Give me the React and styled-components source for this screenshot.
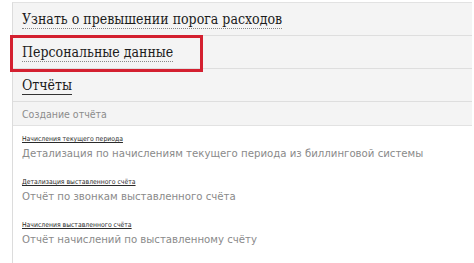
import React from "react";
import styled, { createGlobalStyle } from "styled-components";

const GlobalStyle = createGlobalStyle`
  html, body {
    margin: 0;
    padding: 0;
    background: #fff;
    overflow: hidden;
  }
`;

const Page = styled.div`
  width: 474px;
  height: 263px;
  padding: 2px 2px 0 12px;
  box-sizing: border-box;
`;

const Panel = styled.div`
  border-left: 1px solid #dcdcdc;
  border-top: 1px solid #e2e2e2;
  height: 100%;
  display: flex;
  flex-direction: column;
`;

const MenuRow = styled.div`
  position: relative;
  height: 32px;
  flex: none;
  background: #f4f4f4;
  border-bottom: 1px solid #dedede;
  display: flex;
  align-items: center;
  padding-left: 9px;
`;

const MenuLink = styled.span`
  font-family: "DejaVu Serif Condensed", "DejaVu Serif", serif;
  font-stretch: condensed;
  font-size: 14px;
  color: #1c1c1c;
  line-height: 17px;
  padding-top: 1px;
  border-bottom: 1px ${(p) => (p.$solid ? "solid #333" : "dotted #888")};
`;

const Highlight = styled.div`
  position: absolute;
  z-index: 1;
  left: -3px;
  top: -1px;
  width: 193px;
  height: 37px;
  border: 3px solid #d42030;
  box-sizing: border-box;
`;

const SubHeader = styled.div`
  height: 23px;
  flex: none;
  background: #f4f4f4;
  border-bottom: 1px solid #e2e2e2;
  display: flex;
  align-items: center;
  padding-left: 9px;
  font-family: "DejaVu Sans Condensed", "DejaVu Sans", sans-serif;
  font-stretch: condensed;
  font-size: 10.5px;
  color: #8c8c8c;
`;

const ReportList = styled.div`
  display: flex;
  flex-direction: column;
  gap: 16px;
  padding: 8px 0 0 9px;
`;

const Report = styled.div`
  display: flex;
  flex-direction: column;
  gap: 2px;
`;

const ReportTitle = styled.span`
  font-family: "DejaVu Sans Condensed", "DejaVu Sans", sans-serif;
  font-stretch: condensed;
  font-size: 6.8px;
  color: #2a2a2a;
  text-decoration: underline;
  line-height: 10px;
`;

const ReportDesc = styled.span`
  font-family: "DejaVu Sans Condensed", "DejaVu Sans", sans-serif;
  font-stretch: condensed;
  font-size: 11.3px;
  color: #8a8a8a;
  line-height: 15px;
`;

const reports = [
  {
    title: "Начисления текущего периода",
    desc: "Детализация по начислениям текущего периода из биллинговой системы",
  },
  {
    title: "Детализация выставленного счёта",
    desc: "Отчёт по звонкам выставленного счёта",
  },
  {
    title: "Начисления выставленного счёта",
    desc: "Отчёт начислений по выставленному счёту",
  },
];

export default function App() {
  return (
    <>
      <GlobalStyle />
      <Page>
        <Panel>
          <MenuRow>
            <MenuLink>Узнать о превышении порога расходов</MenuLink>
          </MenuRow>
          <MenuRow>
            <Highlight />
            <MenuLink>Персональные данные</MenuLink>
          </MenuRow>
          <MenuRow>
            <MenuLink $solid>Отчёты</MenuLink>
          </MenuRow>
          <SubHeader>Создание отчёта</SubHeader>
          <ReportList>
            {reports.map((r) => (
              <Report key={r.title}>
                <ReportTitle>{r.title}</ReportTitle>
                <ReportDesc>{r.desc}</ReportDesc>
              </Report>
            ))}
          </ReportList>
        </Panel>
      </Page>
    </>
  );
}
